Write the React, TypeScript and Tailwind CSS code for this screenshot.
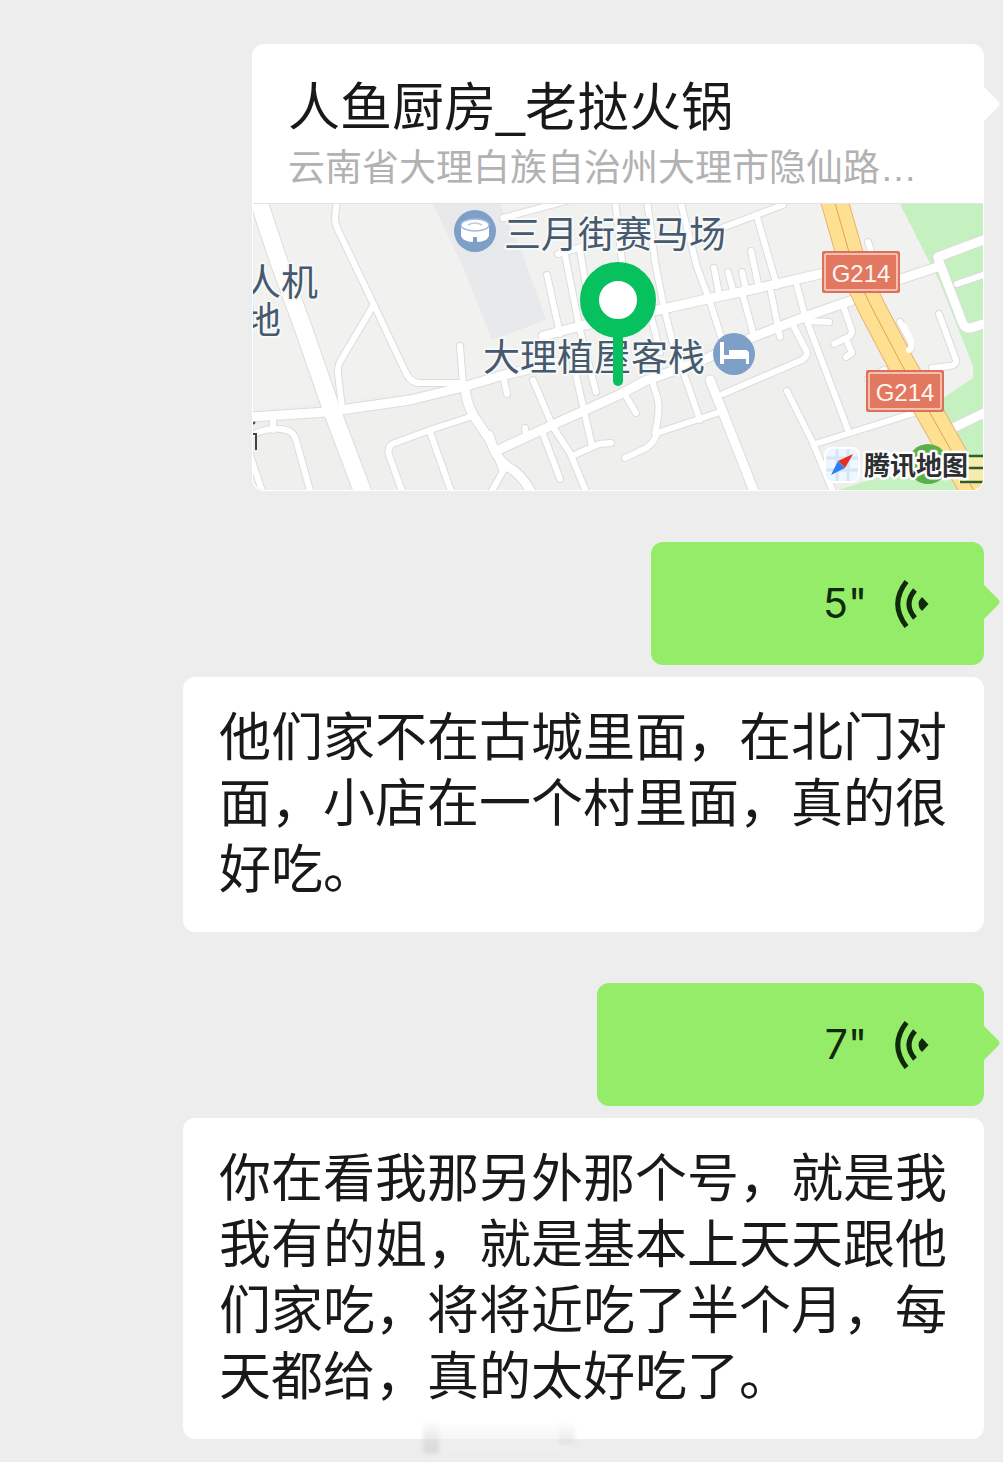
import React from "react";

const cjk = "font-['Liberation_Sans','Noto_Sans_CJK_SC',sans-serif]";

// minor streets, drawn twice: grey casing first, white on top
const streets = [
  "M337 200 L335 218 Q335 224 338 230 L373 303 L405 371 Q410 383 420 383 L463 383",
  "M373 306 L341 360 Q337 367 338 374 L342 408",
  "M460 346 L463 386",
  "M470 417 L430 430 L392 444 Q387 448 389 455 L403 494",
  "M430 432 L452 494",
  "M273 414 V430 M250 436 Q270 426 286 430 Q294 432 296 440 L311 494",
  "M250 455 L263 494",
  "M503 218 L566 201",
  "M547 275 L560 334",
  "M564 250 L580 330 L596 392 M573 362 L592 446",
  "M580 250 L592 322",
  "M558 254 L606 240",
  "M615 200 L622 262",
  "M647 200 L655 262 L664 308 L672 340 L700 420",
  "M680 200 L697 267 L710 302 L724 346",
  "M650 312 L660 352",
  "M714 268 L719 294",
  "M728 272 L733 290",
  "M742 272 L746 290",
  "M722 228 L783 205",
  "M757 217 L777 286",
  "M751 251 L759 288",
  "M743 296 L754 336",
  "M771 292 L780 337",
  "M797 286 L805 316 L848 430",
  "M793 325 L807 352 Q807 357 802 360 L723 394",
  "M808 321 L829 322",
  "M843 305 L852 331 Q851 337 846 338 L834 344 M846 339 L852 353 L846 357",
  "M787 391 L813 443 L834 494",
  "M815 444 L917 412",
  "M533 380 L553 427 L570 453 L587 494",
  "M543 434 L560 479",
  "M572 456 L599 444 L611 443",
  "M525 428 L527 438",
  "M504 380 L507 394",
  "M627 398 L636 413",
  "M653 384 L658 400 Q660 412 655 433",
  "M720 412 L657 433 Q654 445 642 450 L625 458",
  "M490 434 L502 470 M506 466 L490 494",
  "M868 242 L872 254",
  "M900 322 L910 340 Q913 347 909 351",
  "M939 314 L956 360 Q957 365 950 366 L932 368",
  "M868 379 L884 370",
  "M957 284 L986 274",
];

const roads = [
  "M250 417 L327 412 L410 400 L463 387 L500 376 L560 362",
  "M465 387 Q466 402 473 415 L490 440 Q497 460 508 467 Q522 474 532 494",
  "M498 450 L557 423 L623 393 L645 381 L703 360 L753 337 L807 316 L856 299",
  "M543 336 L580 326 L663 309 L707 299 L750 290 L820 274 L858 264",
  "M895 281 L940 266 L938 257 L986 239",
  "M940 264 L963 324 Q966 330 974 327 L986 323",
  "M710 380 L722 410 L755 494",
  "M953 428 L986 412",
];

const highway = "M833 196 L855 273 L873 310 L903 367 L930 413 L978 498";
const avenue = "M257 196 L279 262 L305 333 L331 408 L365 498";

interface IRoad {
  paths: string[];
  width: number;
  color: string;
}

function Roads({ paths, width, color }: IRoad) {
  return (
    <g
      fill="none"
      stroke={color}
      strokeWidth={width}
      strokeLinecap="round"
      strokeLinejoin="round"
    >
      {paths.map((d) => (
        <path key={d} d={d} />
      ))}
    </g>
  );
}

function RouteShield({ x, y }: { x: number; y: number }) {
  return (
    <g transform={`translate(${x} ${y})`}>
      <rect width="78" height="42" rx="2" fill="#de6f58" />
      <rect
        x="3"
        y="3"
        width="72"
        height="36"
        rx="1"
        fill="#e27860"
        stroke="#fbd9cd"
        strokeWidth="1.5"
      />
      <text
        x="39"
        y="31"
        textAnchor="middle"
        fontSize="24"
        fill="#fff6f0"
        className="font-['Liberation_Sans',sans-serif]"
      >
        G214
      </text>
    </g>
  );
}

function MapPreview() {
  return (
    <svg
      viewBox="253 204 730 286"
      className="block w-full rounded-b-xl"
      role="img"
      aria-label="地图"
    >
      <rect x="253" y="204" width="730" height="286" fill="#f1f1ef" />
      <path d="M253 410 L463 387 L703 345 L856 296 L930 413 L960 490 H253Z" fill="#efefee" />
      <path d="M433 204 H500 L523 255 L546 320 L492 340 L463 267Z" fill="#e8e9ea" />
      <path d="M900 204 H983 V490 H960 L930 407 L973 378 V366 L940 283Z" fill="#c5f0c0" />
      <path d="M838 490 L880 477 L960 474 V490Z" fill="#c5f0c0" />

      <Roads paths={streets} width={8} color="#dcdcdb" />
      <Roads paths={roads} width={11} color="#dcdcdb" />
      <Roads paths={[avenue]} width={19} color="#dcdcdb" />
      <Roads paths={streets} width={6} color="#fff" />
      <Roads paths={roads} width={9} color="#fff" />
      <Roads paths={[avenue]} width={17} color="#fff" />

      <Roads paths={[highway]} width={28} color="#eeb06c" />
      <Roads paths={[highway]} width={26} color="#fde091" />
      <Roads paths={[highway]} width={1} color="#e3a155" />
      <Roads paths={["M904 326 L911 340 Q913 347 909 350"]} width={6} color="#fff" />

      {/* metro line and station */}
      <circle cx="928" cy="464" r="20" fill="#5cb04a" />
      <path d="M958 456 H983 V484 H958Z" fill="#f6ecb0" />
      <path d="M962 456 H983 M966 468 H983 M960 482 H983" stroke="#2f5d2b" strokeWidth="2.5" />

      <g
        fontSize="37"
        fill="#46596d"
        stroke="#f7f8f8"
        strokeWidth="4"
        strokeLinejoin="round"
        paintOrder="stroke"
        className="font-['Noto_Sans_CJK_SC',sans-serif]"
      >
        <text x="504" y="248">三月街赛马场</text>
        <text x="483" y="371">大理植屋客栈</text>
        <text x="244" y="296">人机</text>
        <text x="244" y="334">地</text>
      </g>
      <path d="M253 424 L255 422 M253 434 H257 M256 434 V450" stroke="#3d4a3a" strokeWidth="2" />

      {/* stadium */}
      <circle cx="475" cy="231" r="21" fill="#7d9fc8" />
      <path d="M461 225 V236 Q463 242 475 242 Q487 242 489 236 V225Z" fill="#fff" />
      <ellipse cx="475" cy="225" rx="14" ry="6" fill="#fff" stroke="#a3bcd9" strokeWidth="1.5" />
      <path d="M468 225 Q475 221 482 225" stroke="#b9cce2" strokeWidth="1.5" fill="none" />
      <rect x="473" y="237" width="4" height="5" fill="#7d9fc8" />

      {/* hotel */}
      <circle cx="734" cy="354" r="21" fill="#7d9fc8" />
      <path
        d="M720 342 H724 V355 H729 V350 H745 Q749 350 749 354 V364 H746 V359 H724 V364 H720Z"
        fill="#fff"
      />

      <RouteShield x={822} y={251} />
      <RouteShield x={866} y={370} />

      <rect x="825" y="448" width="34" height="34" rx="7" fill="#eef6fe" stroke="#fff" strokeWidth="2" />
      <path d="M837 449 V481 M848 449 V481 M826 458 H858 M826 470 H858" stroke="#d2e6fa" strokeWidth="3" />
      <path d="M853 454 L838 461 L845 468Z" fill="#e5301f" />
      <path d="M831 475 L838 461 L845 468Z" fill="#2f7df0" />
      <text
        x="864"
        y="475"
        fontSize="26"
        fontWeight="700"
        fill="#2d2f31"
        stroke="#fff"
        strokeWidth="5"
        strokeLinejoin="round"
        paintOrder="stroke"
        className="font-['Noto_Sans_CJK_SC',sans-serif]"
      >
        腾讯地图
      </text>

      <path d="M618 330 V381" stroke="#07c15f" strokeWidth="10" strokeLinecap="round" />
      <circle cx="618" cy="300" r="28.5" fill="#fff" stroke="#07c15f" strokeWidth="19" />
    </svg>
  );
}

function Tail({ className }: { className: string }) {
  return (
    <svg
      viewBox="0 0 16 34"
      className={`absolute left-full h-[34px] w-4 ${className}`}
      aria-hidden="true"
    >
      <path d="M0 0 L14 14 Q17 17 14 20 L0 34Z" fill="currentColor" />
    </svg>
  );
}

function LocationCard() {
  return (
    <a
      href="#location"
      className="relative block w-[732px] max-w-full rounded-xl bg-white px-px pb-px"
    >
      <div className="border-b border-[#e2e2e2] px-[35px] pt-[31px] pb-[10px]">
        <h2 className="truncate text-[52px] leading-[66px] text-[#191919]">
          人鱼厨房_老挞火锅
        </h2>
        <p className="mt-1 text-[37px] leading-[48px] whitespace-nowrap text-[#b2b2b2]">
          云南省大理白族自治州大理市隐仙路…
        </p>
      </div>
      <MapPreview />
      <Tail className="top-[43px] text-white" />
    </a>
  );
}

function VoiceMessage({ seconds, width }: { seconds: number; width: string }) {
  return (
    <button
      type="button"
      className={`relative flex max-w-full cursor-pointer items-center justify-end gap-7 rounded-xl bg-[#95ec69] py-8 pr-[55px] text-[#10290a] ${width}`}
    >
      <span className="font-['Inter',sans-serif] text-[41px] leading-[59px]">
        {seconds}"
      </span>
      <svg viewBox="0 0 34 48" className="h-12 w-[34px]" aria-hidden="true">
        <path
          d="M11.500 1.500 Q-6 24 11.500 46.500"
          fill="none"
          stroke="currentColor"
          strokeWidth="5"
        />
        <path
          d="M20 10 Q8 24 20 38"
          fill="none"
          stroke="currentColor"
          strokeWidth="5"
        />
        <path d="M27 17 L33.500 24 L27 31 Q20 24 27 17Z" fill="currentColor" />
      </svg>
      <Tail className="top-[43px] text-[#95ec69]" />
    </button>
  );
}

function TextMessage({ text }: { text: string }) {
  return (
    <p className="w-[801px] max-w-full rounded-xl bg-white px-9 pt-[28px] pb-[29px] text-[52px] leading-[66px] text-[#191919]">
      {text}
    </p>
  );
}

export default function App() {
  return (
    <main
      lang="zh-CN"
      className={`flex min-h-screen flex-col items-end gap-[51px] bg-[#ededed] pt-11 pr-[19px] pb-[23px] pl-4 ${cjk}`}
    >
      <LocationCard />

      <section className="flex w-full flex-col items-end gap-3">
        <VoiceMessage seconds={5} width="w-[333px]" />
        <TextMessage text="他们家不在古城里面，在北门对面，小店在一个村里面，真的很好吃。" />
      </section>

      <section className="relative flex w-full flex-col items-end gap-3">
        <VoiceMessage seconds={7} width="w-[387px]" />
        <TextMessage text="你在看我那另外那个号，就是我我有的姐，就是基本上天天跟他们家吃，将将近吃了半个月，每天都给，真的太好吃了。" />
        {/* faint smudge under the last bubble */}
        <div className="absolute -bottom-3.5 left-[42%] flex h-8 w-[152px] justify-between bg-linear-to-b from-white/0 to-[#efefef] blur-[2px]">
          <span className="w-4 bg-linear-to-b from-black/0 to-black/10" />
          <span className="h-6 w-4 bg-linear-to-b from-black/0 to-black/5" />
        </div>
      </section>
    </main>
  );
}
